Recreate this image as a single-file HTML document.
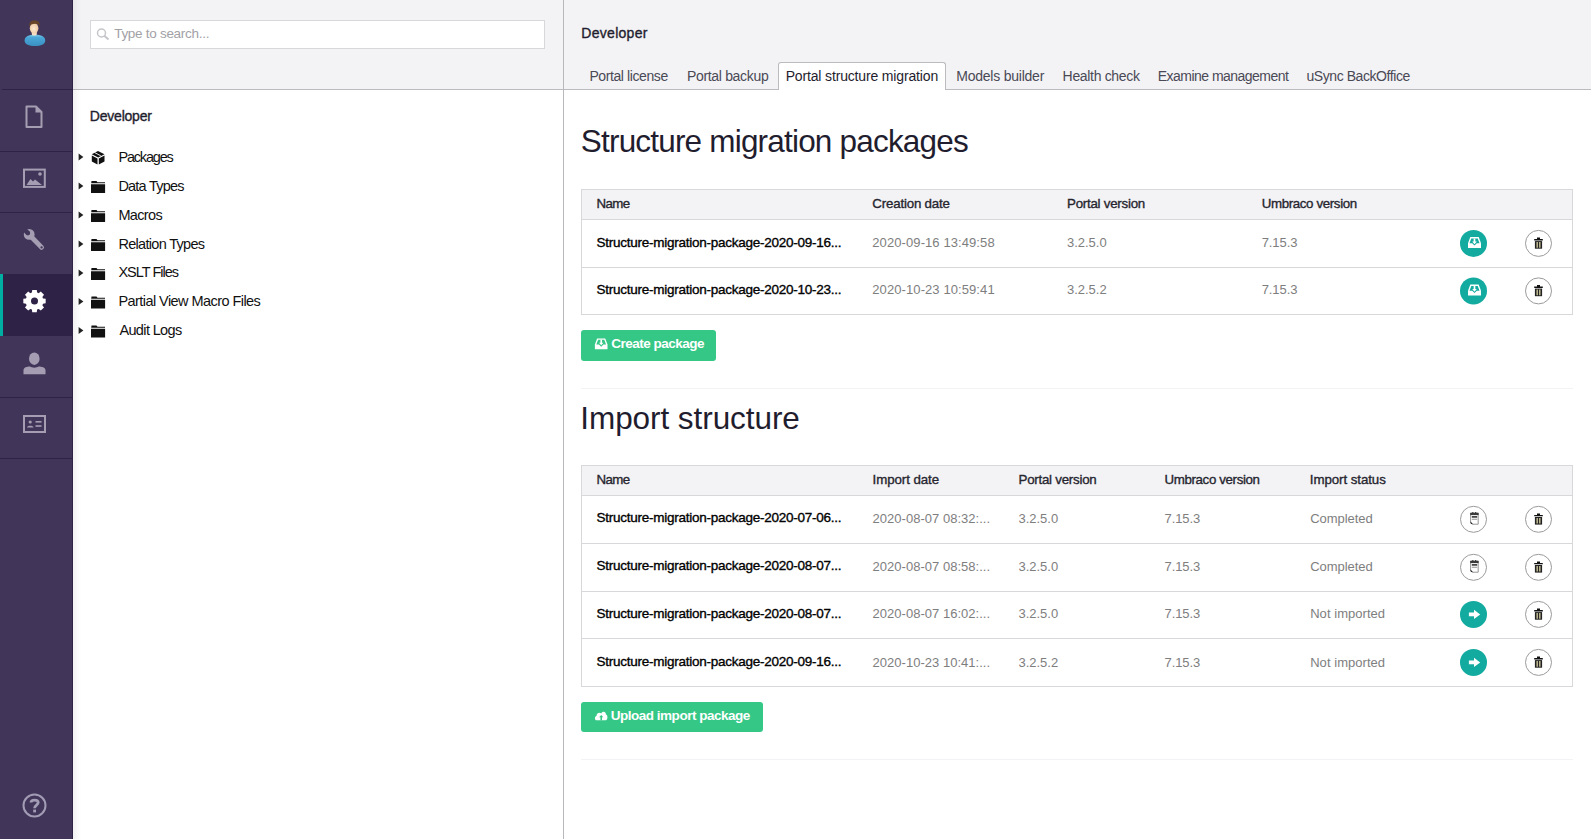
<!DOCTYPE html>
<html><head><meta charset="utf-8">
<style>
*{margin:0;padding:0;box-sizing:border-box}
html,body{width:1591px;height:839px;overflow:hidden;background:#fff;font-family:"Liberation Sans",sans-serif}
.t{position:absolute;white-space:nowrap}
.b{position:absolute}
svg{position:absolute;overflow:visible}
</style></head><body>
<!-- sidebar -->
<div class="b" style="left:0;top:0;width:72px;height:839px;background:#413659"></div>
<div class="b" style="left:72px;top:0;width:1px;height:839px;background:#2e2246"></div>
<div class="b" style="left:2px;top:89px;width:70px;height:1px;background:#2e2246"></div>
<div class="b" style="left:0;top:151px;width:72px;height:1px;background:#2e2246"></div>
<div class="b" style="left:0;top:212px;width:72px;height:1px;background:#2e2246"></div>
<div class="b" style="left:0;top:274px;width:72px;height:62px;background:#2e2246"></div>
<div class="b" style="left:0;top:274px;width:3px;height:62px;background:#00aea2"></div>
<div class="b" style="left:0;top:397px;width:72px;height:1px;background:#2e2246"></div>
<div class="b" style="left:0;top:458px;width:72px;height:1px;background:#2e2246"></div>
<!-- avatar -->
<svg style="left:0;top:0" width="72" height="89">
  <defs>
    <linearGradient id="shirt" x1="0" y1="0" x2="0" y2="1"><stop offset="0" stop-color="#7cc8ea"/><stop offset="0.25" stop-color="#4aa7d8"/><stop offset="1" stop-color="#3a90c2"/></linearGradient>
    <radialGradient id="skin" cx="0.45" cy="0.55" r="0.7"><stop offset="0" stop-color="#fde9d2"/><stop offset="1" stop-color="#eabf93"/></radialGradient>
  </defs>
  <path d="M24.6 40.5 C24.6 36.5 29 34.8 34.9 34.8 C40.8 34.8 45.2 36.5 45.2 40.5 C45.2 44.5 40.8 46 34.9 46 C29 46 24.6 44.5 24.6 40.5Z" fill="url(#shirt)"/>
  <rect x="31.8" y="30.5" width="5" height="5" rx="1.5" fill="#f7e2c8"/>
  <ellipse cx="34.1" cy="28.3" rx="4.3" ry="5.4" fill="url(#skin)"/>
  <path d="M29.4 27.5 C28.8 22 31 20.4 34.5 20.4 C38.5 20.4 40.3 22.5 39.6 27 C39.2 25 38.6 24.2 37.5 24 C35.5 23.6 33 23.8 31 24.6 C30.2 25 29.7 26 29.4 27.5Z" fill="#6a4628"/>
</svg>
<!-- content icon -->
<svg style="left:0;top:89" width="72" height="62">
  <path d="M26.5 17.5 H36 L41.5 23 V38 H26.5 Z" fill="none" stroke="#a59eb3" stroke-width="2" stroke-linejoin="round"/>
  <path d="M35.5 17.5 L41.5 23.5 H35.5Z" fill="#a59eb3"/>
</svg>
<!-- media icon -->
<svg style="left:0;top:151" width="72" height="61">
  <rect x="24" y="18.6" width="20.8" height="17.3" fill="none" stroke="#a59eb3" stroke-width="2"/>
  <path d="M26.5 34 L30.5 28 L33 30.5 L35 28.5 L42 34Z" fill="#a59eb3"/>
  <circle cx="40" cy="23" r="1.8" fill="#a59eb3"/>
</svg>
<!-- wrench -->
<svg style="left:0;top:212" width="72" height="62">
  <line x1="30.5" y1="24" x2="41.6" y2="35.4" stroke="#a59eb3" stroke-width="4.8" stroke-linecap="round"/>
  <circle cx="29.2" cy="22.4" r="5.4" fill="#a59eb3"/>
  <circle cx="27.9" cy="21.1" r="2.3" fill="#413659"/>
  <path d="M29.53 19.47 L26.27 22.73 L20.37 16.83 L23.63 13.57Z" fill="#413659"/>
  <circle cx="41.6" cy="35.4" r="1.15" fill="#413659"/>
</svg>
<!-- gear -->
<svg style="left:0;top:274" width="72" height="62">
  <path d="M31.90 18.59 L32.23 15.93 L36.77 15.93 L37.10 18.59 A8.9 8.9 0 0 1 38.68 19.24 L40.79 17.59 L44.01 20.81 L42.36 22.92 A8.9 8.9 0 0 1 43.01 24.50 L45.67 24.83 L45.67 29.37 L43.01 29.70 A8.9 8.9 0 0 1 42.36 31.28 L44.01 33.39 L40.79 36.61 L38.68 34.96 A8.9 8.9 0 0 1 37.10 35.61 L36.77 38.27 L32.23 38.27 L31.90 35.61 A8.9 8.9 0 0 1 30.32 34.96 L28.21 36.61 L24.99 33.39 L26.64 31.28 A8.9 8.9 0 0 1 25.99 29.70 L23.33 29.37 L23.33 24.83 L25.99 24.50 A8.9 8.9 0 0 1 26.64 22.92 L24.99 20.81 L28.21 17.59 L30.32 19.24 A8.9 8.9 0 0 1 31.90 18.59 Z" fill="#fff"/>
  <circle cx="34.5" cy="27.1" r="3.5" fill="#2e2246"/>
</svg>
<!-- user -->
<svg style="left:0;top:336" width="72" height="61">
  <ellipse cx="34.3" cy="22.7" rx="5.3" ry="6.2" fill="#a59eb3"/>
  <path d="M23.5 38.3 V34 C23.5 31.5 27 30.5 30 30.5 C32 32 36.5 32 38.5 30.5 C41.5 30.5 45.5 31.5 45.5 34 V38.3Z" fill="#a59eb3"/>
</svg>
<!-- member card -->
<svg style="left:0;top:397" width="72" height="61">
  <rect x="24" y="19" width="21" height="16" fill="none" stroke="#a59eb3" stroke-width="2"/>
  <circle cx="30.2" cy="25" r="1.6" fill="#a59eb3"/>
  <path d="M27 30.5 C27 28 33.5 28 33.5 30.5Z" fill="#a59eb3"/>
  <rect x="35.5" y="24" width="6" height="1.6" fill="#a59eb3"/>
  <rect x="35.5" y="28.2" width="6" height="1.6" fill="#a59eb3"/>
  <rect x="29" y="18" width="1.5" height="2" fill="#a59eb3"/>
  <rect x="38.5" y="18" width="1.5" height="2" fill="#a59eb3"/>
</svg>
<!-- help -->
<svg style="left:0;top:780" width="72" height="50">
  <circle cx="34.5" cy="25.5" r="11" fill="none" stroke="#a39cb5" stroke-width="2"/>
  <path d="M31 22.6 C31 19.2 38.2 19.2 38.2 22.6 C38.2 25.2 34.6 25 34.6 28.2" fill="none" stroke="#a39cb5" stroke-width="2.8"/>
  <rect x="33.2" y="29.6" width="2.8" height="2.8" fill="#a39cb5"/>
</svg>

<!-- tree panel -->
<div class="b" style="left:73px;top:0;width:490px;height:89px;background:#f3f3f5"></div>
<div class="b" style="left:73px;top:89px;width:490px;height:1px;background:#bbbabf"></div>
<div class="b" style="left:73px;top:0;width:8px;height:839px;background:linear-gradient(to right,rgba(0,0,0,0.05),rgba(0,0,0,0))"></div>
<div class="b" style="left:90px;top:20px;width:455px;height:29px;background:#fff;border:1px solid #d8d7d9"></div>
<svg style="left:0;top:0" width="130" height="50">
  <circle cx="101.5" cy="33" r="4" fill="none" stroke="#c6c5ca" stroke-width="1.5"/>
  <path d="M104.3 35.8 L108.5 39.5" stroke="#c6c5ca" stroke-width="2"/>
</svg>
<div class="b" style="left:563px;top:0;width:1px;height:839px;background:#b8b7bc"></div>

<!-- tree icons -->
<svg style="left:0;top:0" width="120" height="345">
  <g fill="#222">
    <path d="M78.6 153.4 L83.4 157.0 L78.6 160.6Z"/>
    <path d="M78.6 182.4 L83.4 186.0 L78.6 189.6Z"/>
    <path d="M78.6 211.4 L83.4 215.0 L78.6 218.6Z"/>
    <path d="M78.6 240.4 L83.4 244.0 L78.6 247.6Z"/>
    <path d="M78.6 269.4 L83.4 273.0 L78.6 276.6Z"/>
    <path d="M78.6 297.9 L83.4 301.5 L78.6 305.1Z"/>
    <path d="M78.6 326.9 L83.4 330.5 L78.6 334.1Z"/>
  </g>
  <g fill="#111">
    <path d="M98 151 L104.5 154.3 L98.2 157.6 L91.8 154.3Z"/>
    <path d="M91.8 155.6 L97.5 158.6 V164.6 L91.8 161.5Z"/>
    <path d="M98.8 158.6 L104.5 155.6 V161.5 L98.8 164.6Z"/>
  </g>
  <path d="M94.5 152.5 L100.8 155.8" stroke="#fff" stroke-width="0.9"/>
  <g id="folders" fill="#111">
    <path d="M91 184.3 H105.1 V193 H91Z M91.5 181 H96.5 L97.5 182.3 H105 V183.2 H91.2Z"/>
  </g>
  <use href="#folders" y="29"/>
  <use href="#folders" y="58"/>
  <use href="#folders" y="87"/>
  <use href="#folders" y="115.5"/>
  <use href="#folders" y="144.5"/>
</svg>

<!-- main -->
<div class="b" style="left:564px;top:0;width:1027px;height:89px;background:#f3f3f5"></div>
<div class="b" style="left:564px;top:89px;width:1027px;height:1px;background:#bbbabf"></div>
<div class="b" style="left:778px;top:62px;width:168px;height:28px;background:#fff;border:1px solid #bbbabf;border-bottom:none;border-radius:3px 3px 0 0"></div>

<!-- table1 -->
<div class="b" style="left:581px;top:189px;width:992px;height:126px;border:1px solid #d8d7d9;background:#fff"></div>
<div class="b" style="left:582px;top:190px;width:990px;height:29px;background:#f3f3f5"></div>
<div class="b" style="left:582px;top:219px;width:990px;height:1px;background:#d8d7d9"></div>
<div class="b" style="left:582px;top:267px;width:990px;height:1px;background:#d8d7d9"></div>
<div class="b" style="left:581px;top:330px;width:135px;height:31px;background:#35c786;border-radius:3px"></div>
<div class="b" style="left:581px;top:388px;width:992px;height:1px;background:#f3f3f5"></div>

<!-- table2 -->
<div class="b" style="left:581px;top:465px;width:992px;height:222px;border:1px solid #d8d7d9;background:#fff"></div>
<div class="b" style="left:582px;top:466px;width:990px;height:29px;background:#f3f3f5"></div>
<div class="b" style="left:582px;top:495px;width:990px;height:1px;background:#d8d7d9"></div>
<div class="b" style="left:582px;top:543px;width:990px;height:1px;background:#d8d7d9"></div>
<div class="b" style="left:582px;top:591px;width:990px;height:1px;background:#d8d7d9"></div>
<div class="b" style="left:582px;top:638px;width:990px;height:1px;background:#d8d7d9"></div>
<div class="b" style="left:581px;top:702px;width:182px;height:30px;background:#35c786;border-radius:3px"></div>
<div class="b" style="left:581px;top:759px;width:992px;height:1px;background:#f3f3f5"></div>

<svg style="left:0;top:0" width="1591" height="839">
<circle cx="1473.5" cy="243.4" r="13.5" fill="#13aba0"/>
<g transform="translate(1474.5 242.6)">
  <path d="M-4.2 -5.5 H4.2 L6.5 0.6 V5.5 H-6.5 V0.6Z" fill="#fff"/>
  <path d="M-3.2 -4.2 H3.2 L5 0.6 H2.3 L0 3.0 L-2.3 0.6 H-5Z" fill="#13aba0"/>
  <path d="M-0.85 -4.2 H0.85 V-1.0 H2.3 L0 1.6 L-2.3 -1.0 H-0.85Z" fill="#fff"/>
</g>
<g transform="translate(1538.5 243.4)">
  <circle r="13" fill="#fff" stroke="#9b9b9b" stroke-width="1"/>
  <path d="M-4.3 -4.3 H4.3 V-3 H-4.3Z M-1.5 -5.8 H1.5 V-4.3 H-1.5Z" fill="#111"/>
  <path d="M-3.6 -2.3 H3.6 V5.3 H-3.6Z" fill="#222"/>
  <path d="M-2 -1.3 H-0.6 V4.3 H-2Z M0.6 -1.3 H2 V4.3 H0.6Z" fill="#c9c39a"/>
</g>
<circle cx="1473.5" cy="290.9" r="13.5" fill="#13aba0"/>
<g transform="translate(1474.5 290.09999999999997)">
  <path d="M-4.2 -5.5 H4.2 L6.5 0.6 V5.5 H-6.5 V0.6Z" fill="#fff"/>
  <path d="M-3.2 -4.2 H3.2 L5 0.6 H2.3 L0 3.0 L-2.3 0.6 H-5Z" fill="#13aba0"/>
  <path d="M-0.85 -4.2 H0.85 V-1.0 H2.3 L0 1.6 L-2.3 -1.0 H-0.85Z" fill="#fff"/>
</g>
<g transform="translate(1538.5 290.9)">
  <circle r="13" fill="#fff" stroke="#9b9b9b" stroke-width="1"/>
  <path d="M-4.3 -4.3 H4.3 V-3 H-4.3Z M-1.5 -5.8 H1.5 V-4.3 H-1.5Z" fill="#111"/>
  <path d="M-3.6 -2.3 H3.6 V5.3 H-3.6Z" fill="#222"/>
  <path d="M-2 -1.3 H-0.6 V4.3 H-2Z M0.6 -1.3 H2 V4.3 H0.6Z" fill="#c9c39a"/>
</g>
<circle cx="1473.5" cy="519.3" r="13" fill="#fff" stroke="#9b9b9b" stroke-width="1"/>
<g transform="translate(1474.4 518.6999999999999)">
  <path d="M-3.8 -5.5 H3.8 V5.5 H-1.6 L-3.8 3.2Z" fill="#fff" stroke="#8a8a8a" stroke-width="0.9"/>
  <rect x="-4.2" y="-5.9" width="8.4" height="2.3" fill="#3a3a3a"/>
  <rect x="-2.2" y="-6.6" width="1.2" height="1.5" fill="#333"/>
  <rect x="0.6" y="-6.6" width="1.2" height="1.5" fill="#333"/>
  <rect x="-2.6" y="-2.6" width="5.4" height="1.6" fill="#333"/>
  <rect x="-2.6" y="0.1" width="5.4" height="0.8" fill="#777"/>
  <path d="M-4.3 2.6 L-1.3 5.9 L-3.6 5.0Z" fill="#111"/>
</g>
<g transform="translate(1538.5 519.3)">
  <circle r="13" fill="#fff" stroke="#9b9b9b" stroke-width="1"/>
  <path d="M-4.3 -4.3 H4.3 V-3 H-4.3Z M-1.5 -5.8 H1.5 V-4.3 H-1.5Z" fill="#111"/>
  <path d="M-3.6 -2.3 H3.6 V5.3 H-3.6Z" fill="#222"/>
  <path d="M-2 -1.3 H-0.6 V4.3 H-2Z M0.6 -1.3 H2 V4.3 H0.6Z" fill="#c9c39a"/>
</g>
<circle cx="1473.5" cy="567.3" r="13" fill="#fff" stroke="#9b9b9b" stroke-width="1"/>
<g transform="translate(1474.4 566.6999999999999)">
  <path d="M-3.8 -5.5 H3.8 V5.5 H-1.6 L-3.8 3.2Z" fill="#fff" stroke="#8a8a8a" stroke-width="0.9"/>
  <rect x="-4.2" y="-5.9" width="8.4" height="2.3" fill="#3a3a3a"/>
  <rect x="-2.2" y="-6.6" width="1.2" height="1.5" fill="#333"/>
  <rect x="0.6" y="-6.6" width="1.2" height="1.5" fill="#333"/>
  <rect x="-2.6" y="-2.6" width="5.4" height="1.6" fill="#333"/>
  <rect x="-2.6" y="0.1" width="5.4" height="0.8" fill="#777"/>
  <path d="M-4.3 2.6 L-1.3 5.9 L-3.6 5.0Z" fill="#111"/>
</g>
<g transform="translate(1538.5 567.3)">
  <circle r="13" fill="#fff" stroke="#9b9b9b" stroke-width="1"/>
  <path d="M-4.3 -4.3 H4.3 V-3 H-4.3Z M-1.5 -5.8 H1.5 V-4.3 H-1.5Z" fill="#111"/>
  <path d="M-3.6 -2.3 H3.6 V5.3 H-3.6Z" fill="#222"/>
  <path d="M-2 -1.3 H-0.6 V4.3 H-2Z M0.6 -1.3 H2 V4.3 H0.6Z" fill="#c9c39a"/>
</g>
<g transform="translate(1473.5 614.4)">
  <circle r="13.5" fill="#13aba0"/>
  <path d="M-4.6 -1.8 H0.5 V-4.6 L6.7 0 L0.5 4.6 V1.8 H-4.6Z" fill="#fff"/>
</g>
<g transform="translate(1538.5 614.4)">
  <circle r="13" fill="#fff" stroke="#9b9b9b" stroke-width="1"/>
  <path d="M-4.3 -4.3 H4.3 V-3 H-4.3Z M-1.5 -5.8 H1.5 V-4.3 H-1.5Z" fill="#111"/>
  <path d="M-3.6 -2.3 H3.6 V5.3 H-3.6Z" fill="#222"/>
  <path d="M-2 -1.3 H-0.6 V4.3 H-2Z M0.6 -1.3 H2 V4.3 H0.6Z" fill="#c9c39a"/>
</g>
<g transform="translate(1473.5 662.4)">
  <circle r="13.5" fill="#13aba0"/>
  <path d="M-4.6 -1.8 H0.5 V-4.6 L6.7 0 L0.5 4.6 V1.8 H-4.6Z" fill="#fff"/>
</g>
<g transform="translate(1538.5 662.4)">
  <circle r="13" fill="#fff" stroke="#9b9b9b" stroke-width="1"/>
  <path d="M-4.3 -4.3 H4.3 V-3 H-4.3Z M-1.5 -5.8 H1.5 V-4.3 H-1.5Z" fill="#111"/>
  <path d="M-3.6 -2.3 H3.6 V5.3 H-3.6Z" fill="#222"/>
  <path d="M-2 -1.3 H-0.6 V4.3 H-2Z M0.6 -1.3 H2 V4.3 H0.6Z" fill="#c9c39a"/>
</g>
<g transform="translate(601.2 343.8) scale(0.97)">
  <path d="M-4.2 -5.5 H4.2 L6.5 0.6 V5.5 H-6.5 V0.6Z" fill="#fff"/>
  <path d="M-3.2 -4.2 H3.2 L5 0.6 H2.3 L0 3.0 L-2.3 0.6 H-5Z" fill="#35c786"/>
  <path d="M-0.85 -4.2 H0.85 V-1.0 H2.3 L0 1.6 L-2.3 -1.0 H-0.85Z" fill="#fff"/>
</g>
<g transform="translate(601.2 716.3)">
  <path d="M-4.6 3.9 C-6.7 3.9 -6.9 0.2 -4.7 -0.4 C-4.6 -3.4 -1.6 -4.4 0 -2.9 C1 -5.6 5 -5.2 4.7 -1.7 C6.8 -1.3 6.8 3.9 4.6 3.9 Z" fill="#fff"/>
  <path d="M0 -1.3 L2.1 1.0 H0.8 V4.0 H-0.8 V1.0 H-2.1Z" fill="#35c786"/>
</g>
</svg>
<div class="t" style="left:581.3px;top:25.8px;font-size:14px;line-height:14px;font-weight:normal;color:#1f1d2e;letter-spacing:0.287px;-webkit-text-stroke:0.35px #1f1d2e">Developer</div>
<div class="t" style="left:589.4px;top:68.9px;font-size:14px;line-height:14px;font-weight:normal;color:#4a4956;letter-spacing:-0.400px">Portal license</div>
<div class="t" style="left:686.9px;top:68.9px;font-size:14px;line-height:14px;font-weight:normal;color:#4a4956;letter-spacing:-0.317px">Portal backup</div>
<div class="t" style="left:785.7px;top:68.9px;font-size:14px;line-height:14px;font-weight:normal;color:#1f1d2e;letter-spacing:-0.156px">Portal structure migration</div>
<div class="t" style="left:956.2px;top:68.9px;font-size:14px;line-height:14px;font-weight:normal;color:#4a4956;letter-spacing:-0.223px">Models builder</div>
<div class="t" style="left:1062.6px;top:68.9px;font-size:14px;line-height:14px;font-weight:normal;color:#4a4956;letter-spacing:-0.327px">Health check</div>
<div class="t" style="left:1157.8px;top:68.9px;font-size:14px;line-height:14px;font-weight:normal;color:#4a4956;letter-spacing:-0.529px">Examine management</div>
<div class="t" style="left:1306.5px;top:68.9px;font-size:14px;line-height:14px;font-weight:normal;color:#4a4956;letter-spacing:-0.433px">uSync BackOffice</div>
<div class="t" style="left:114.2px;top:26.5px;font-size:13.5px;line-height:13.5px;font-weight:normal;color:#a2a1a6;letter-spacing:-0.287px">Type to search...</div>
<div class="t" style="left:89.8px;top:108.9px;font-size:14px;line-height:14px;font-weight:normal;color:#1f1d2e;letter-spacing:-0.213px;-webkit-text-stroke:0.35px #1f1d2e">Developer</div>
<div class="t" style="left:118.4px;top:150.2px;font-size:14.5px;line-height:14.5px;font-weight:normal;color:#111;letter-spacing:-1.171px">Packages</div>
<div class="t" style="left:118.4px;top:179.1px;font-size:14.5px;line-height:14.5px;font-weight:normal;color:#111;letter-spacing:-0.778px">Data Types</div>
<div class="t" style="left:118.4px;top:207.8px;font-size:14.5px;line-height:14.5px;font-weight:normal;color:#111;letter-spacing:-0.640px">Macros</div>
<div class="t" style="left:118.4px;top:236.7px;font-size:14.5px;line-height:14.5px;font-weight:normal;color:#111;letter-spacing:-0.692px">Relation Types</div>
<div class="t" style="left:118.4px;top:265.4px;font-size:14.5px;line-height:14.5px;font-weight:normal;color:#111;letter-spacing:-0.989px">XSLT Files</div>
<div class="t" style="left:118.4px;top:294.2px;font-size:14.5px;line-height:14.5px;font-weight:normal;color:#111;letter-spacing:-0.557px">Partial View Macro Files</div>
<div class="t" style="left:119.4px;top:323.1px;font-size:14.5px;line-height:14.5px;font-weight:normal;color:#111;letter-spacing:-0.633px">Audit Logs</div>
<div class="t" style="left:580.8px;top:126.2px;font-size:31.5px;line-height:31.5px;font-weight:normal;color:#1f1d2e;letter-spacing:-0.807px">Structure migration packages</div>
<div class="t" style="left:580.3px;top:402.6px;font-size:31.5px;line-height:31.5px;font-weight:normal;color:#1f1d2e;letter-spacing:-0.067px">Import structure</div>
<div class="t" style="left:596.4px;top:196.5px;font-size:13.3px;line-height:13.3px;font-weight:normal;color:#26252f;letter-spacing:-0.600px;-webkit-text-stroke:0.35px #26252f">Name</div>
<div class="t" style="left:872.3px;top:196.5px;font-size:13.3px;line-height:13.3px;font-weight:normal;color:#26252f;letter-spacing:-0.183px;-webkit-text-stroke:0.35px #26252f">Creation date</div>
<div class="t" style="left:1067.0px;top:196.5px;font-size:13.3px;line-height:13.3px;font-weight:normal;color:#26252f;letter-spacing:-0.238px;-webkit-text-stroke:0.35px #26252f">Portal version</div>
<div class="t" style="left:1261.7px;top:196.5px;font-size:13.3px;line-height:13.3px;font-weight:normal;color:#26252f;letter-spacing:-0.357px;-webkit-text-stroke:0.35px #26252f">Umbraco version</div>
<div class="t" style="left:596.4px;top:235.6px;font-size:13.5px;line-height:13.5px;font-weight:normal;color:#000;letter-spacing:-0.250px;-webkit-text-stroke:0.35px #000">Structure-migration-package-2020-09-16...</div>
<div class="t" style="left:872.3px;top:235.8px;font-size:13px;line-height:13px;font-weight:normal;color:#7e7e7e;letter-spacing:0.089px">2020-09-16 13:49:58</div>
<div class="t" style="left:1067.0px;top:235.8px;font-size:13px;line-height:13px;font-weight:normal;color:#7e7e7e;letter-spacing:-0.017px">3.2.5.0</div>
<div class="t" style="left:1261.7px;top:235.8px;font-size:13px;line-height:13px;font-weight:normal;color:#7e7e7e;letter-spacing:-0.080px">7.15.3</div>
<div class="t" style="left:596.4px;top:283.1px;font-size:13.5px;line-height:13.5px;font-weight:normal;color:#000;letter-spacing:-0.250px;-webkit-text-stroke:0.35px #000">Structure-migration-package-2020-10-23...</div>
<div class="t" style="left:872.3px;top:283.3px;font-size:13px;line-height:13px;font-weight:normal;color:#7e7e7e;letter-spacing:0.089px">2020-10-23 10:59:41</div>
<div class="t" style="left:1067.0px;top:283.3px;font-size:13px;line-height:13px;font-weight:normal;color:#7e7e7e;letter-spacing:-0.017px">3.2.5.2</div>
<div class="t" style="left:1261.7px;top:283.3px;font-size:13px;line-height:13px;font-weight:normal;color:#7e7e7e;letter-spacing:-0.080px">7.15.3</div>
<div class="t" style="left:596.4px;top:472.8px;font-size:13.3px;line-height:13.3px;font-weight:normal;color:#26252f;letter-spacing:-0.600px;-webkit-text-stroke:0.35px #26252f">Name</div>
<div class="t" style="left:872.6px;top:472.8px;font-size:13.3px;line-height:13.3px;font-weight:normal;color:#26252f;letter-spacing:-0.080px;-webkit-text-stroke:0.35px #26252f">Import date</div>
<div class="t" style="left:1018.5px;top:472.8px;font-size:13.3px;line-height:13.3px;font-weight:normal;color:#26252f;letter-spacing:-0.238px;-webkit-text-stroke:0.35px #26252f">Portal version</div>
<div class="t" style="left:1164.5px;top:472.8px;font-size:13.3px;line-height:13.3px;font-weight:normal;color:#26252f;letter-spacing:-0.357px;-webkit-text-stroke:0.35px #26252f">Umbraco version</div>
<div class="t" style="left:1309.8px;top:472.8px;font-size:13.3px;line-height:13.3px;font-weight:normal;color:#26252f;letter-spacing:-0.067px;-webkit-text-stroke:0.35px #26252f">Import status</div>
<div class="t" style="left:596.4px;top:511.2px;font-size:13.5px;line-height:13.5px;font-weight:normal;color:#000;letter-spacing:-0.250px;-webkit-text-stroke:0.35px #000">Structure-migration-package-2020-07-06...</div>
<div class="t" style="left:872.6px;top:511.5px;font-size:13px;line-height:13px;font-weight:normal;color:#7e7e7e;letter-spacing:0.021px">2020-08-07 08:32:...</div>
<div class="t" style="left:1018.5px;top:511.5px;font-size:13px;line-height:13px;font-weight:normal;color:#7e7e7e;letter-spacing:-0.017px">3.2.5.0</div>
<div class="t" style="left:1164.5px;top:511.5px;font-size:13px;line-height:13px;font-weight:normal;color:#7e7e7e;letter-spacing:-0.080px">7.15.3</div>
<div class="t" style="left:1310.2px;top:511.5px;font-size:13px;line-height:13px;font-weight:normal;color:#7e7e7e;letter-spacing:-0.037px">Completed</div>
<div class="t" style="left:596.4px;top:559.4px;font-size:13.5px;line-height:13.5px;font-weight:normal;color:#000;letter-spacing:-0.250px;-webkit-text-stroke:0.35px #000">Structure-migration-package-2020-08-07...</div>
<div class="t" style="left:872.6px;top:559.6px;font-size:13px;line-height:13px;font-weight:normal;color:#7e7e7e;letter-spacing:0.021px">2020-08-07 08:58:...</div>
<div class="t" style="left:1018.5px;top:559.6px;font-size:13px;line-height:13px;font-weight:normal;color:#7e7e7e;letter-spacing:-0.017px">3.2.5.0</div>
<div class="t" style="left:1164.5px;top:559.6px;font-size:13px;line-height:13px;font-weight:normal;color:#7e7e7e;letter-spacing:-0.080px">7.15.3</div>
<div class="t" style="left:1310.2px;top:559.6px;font-size:13px;line-height:13px;font-weight:normal;color:#7e7e7e;letter-spacing:-0.037px">Completed</div>
<div class="t" style="left:596.4px;top:607.1px;font-size:13.5px;line-height:13.5px;font-weight:normal;color:#000;letter-spacing:-0.250px;-webkit-text-stroke:0.35px #000">Structure-migration-package-2020-08-07...</div>
<div class="t" style="left:872.6px;top:607.4px;font-size:13px;line-height:13px;font-weight:normal;color:#7e7e7e;letter-spacing:0.021px">2020-08-07 16:02:...</div>
<div class="t" style="left:1018.5px;top:607.4px;font-size:13px;line-height:13px;font-weight:normal;color:#7e7e7e;letter-spacing:-0.017px">3.2.5.0</div>
<div class="t" style="left:1164.5px;top:607.4px;font-size:13px;line-height:13px;font-weight:normal;color:#7e7e7e;letter-spacing:-0.080px">7.15.3</div>
<div class="t" style="left:1310.2px;top:607.4px;font-size:13px;line-height:13px;font-weight:normal;color:#7e7e7e;letter-spacing:0.045px">Not imported</div>
<div class="t" style="left:596.4px;top:655.2px;font-size:13.5px;line-height:13.5px;font-weight:normal;color:#000;letter-spacing:-0.250px;-webkit-text-stroke:0.35px #000">Structure-migration-package-2020-09-16...</div>
<div class="t" style="left:872.6px;top:655.5px;font-size:13px;line-height:13px;font-weight:normal;color:#7e7e7e;letter-spacing:0.021px">2020-10-23 10:41:...</div>
<div class="t" style="left:1018.5px;top:655.5px;font-size:13px;line-height:13px;font-weight:normal;color:#7e7e7e;letter-spacing:-0.017px">3.2.5.2</div>
<div class="t" style="left:1164.5px;top:655.5px;font-size:13px;line-height:13px;font-weight:normal;color:#7e7e7e;letter-spacing:-0.080px">7.15.3</div>
<div class="t" style="left:1310.2px;top:655.5px;font-size:13px;line-height:13px;font-weight:normal;color:#7e7e7e;letter-spacing:0.045px">Not imported</div>
<div class="t" style="left:611.3px;top:337.2px;font-size:13.5px;line-height:13.5px;font-weight:bold;color:#fff;letter-spacing:-0.508px">Create package</div>
<div class="t" style="left:610.7px;top:709.0px;font-size:13.5px;line-height:13.5px;font-weight:bold;color:#fff;letter-spacing:-0.480px">Upload import package</div>
</body></html>
